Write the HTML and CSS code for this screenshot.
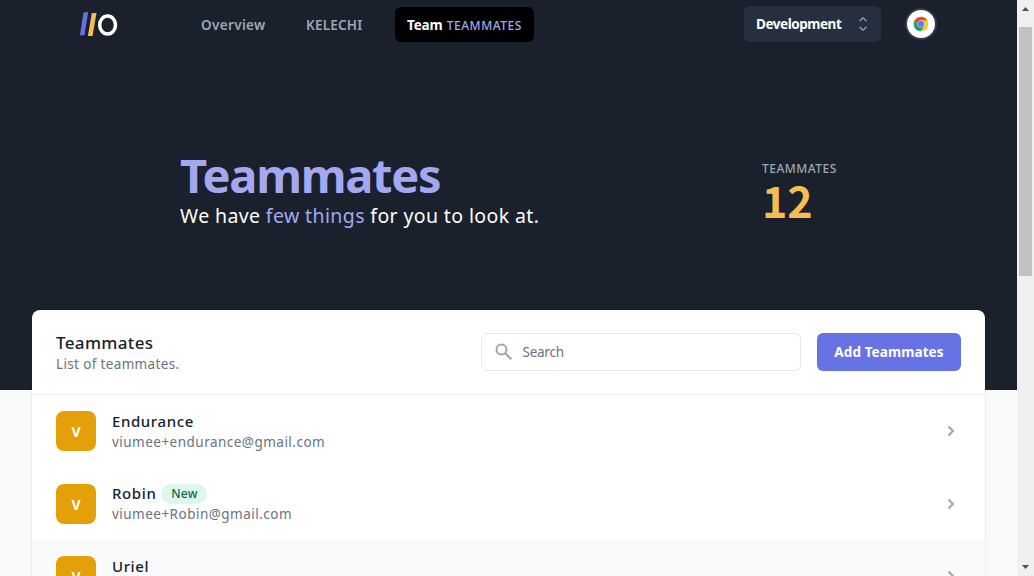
FILE: index.html
```html
<!DOCTYPE html>
<html lang="en">
<head>
<meta charset="utf-8">
<title>Teammates</title>
<link rel="stylesheet" href="styles.css">
</head>
<body>
<div class="page">
  <header class="hero">
    <nav class="nav">
      <svg class="logo" width="40" height="26" viewBox="0 0 40 26">
        <path d="M3.600 .2h4.600L4.400 23.300H-.1z" fill="#6772e5"/>
        <path d="M11.800 1h4.700L12.500 24H7.900z" fill="#f7bc52"/>
        <ellipse cx="27.600" cy="13" rx="7.900" ry="9" fill="none" stroke="#fff" stroke-width="3.500"/>
      </svg>
      <div class="links">
        <a class="link overview">Overview</a>
        <a class="link kelechi">KELECHI</a>
        <a class="link active"><span class="team">Team</span><span class="team-name">TEAMMATES</span></a>
      </div>
      <div class="select"><span>Development</span>
        <svg width="10" height="16" viewBox="0 0 10 16" fill="none" stroke="#8d96a5" stroke-width="1.500" stroke-linecap="round" stroke-linejoin="round"><path d="M1.800 4.800 5 1.800 8.200 4.800M1.800 11.200 5 14.200 8.200 11.200"/></svg>
      </div>
      <div class="profile">
        <svg width="16" height="16" viewBox="0 0 16 16">
          <circle cx="8" cy="8" r="7.300" fill="#fbc934"/>
          <path d="M1.680 4.350A7.300 7.300 0 0 1 14.320 4.350L8 4.350 4.840 9.830z" fill="#dc4c3f"/>
          <path d="M1.680 4.350A7.300 7.300 0 0 0 8 15.300L11.160 9.830 4.840 9.830z" fill="#1ea362"/>
          <circle cx="8" cy="8" r="3.500" fill="#d5e0f5"/>
          <circle cx="8" cy="8" r="3" fill="#4285f4"/>
        </svg>
      </div>
    </nav>
    <div class="intro">
      <div class="greeting">
        <h1>Teammates</h1>
        <p>We have <span>few things</span> for you to look at.</p>
      </div>
      <div class="stat">
        <div class="stat-label">TEAMMATES</div>
        <div class="stat-value">12</div>
      </div>
    </div>
  </header>
  <main class="card">
    <div class="card-head">
      <div class="card-title">
        <h2>Teammates</h2>
        <p>List of teammates.</p>
      </div>
      <div class="search">
        <svg width="18" height="18" viewBox="0 0 18 18" fill="none" stroke="#9fa6b2" stroke-width="2"><circle cx="6.500" cy="6.500" r="5"/><path d="M10 10l6.300 6.300"/></svg>
        <span>Search</span>
      </div>
      <button class="add">Add Teammates</button>
    </div>
    <div class="row">
      <div class="avatar">V</div>
      <div class="person"><div class="name"><span>Endurance</span></div><div class="email">viumee+endurance@gmail.com</div></div>
      <svg class="chevron" width="8" height="12" viewBox="0 0 8 12"><path d="M1.500 1.500 6 6 1.500 10.500"/></svg>
    </div>
    <div class="row">
      <div class="avatar">V</div>
      <div class="person"><div class="name"><span>Robin</span><span class="badge">New</span></div><div class="email">viumee+Robin@gmail.com</div></div>
      <svg class="chevron" width="8" height="12" viewBox="0 0 8 12"><path d="M1.500 1.500 6 6 1.500 10.500"/></svg>
    </div>
    <div class="row shaded">
      <div class="avatar">V</div>
      <div class="person"><div class="name"><span>Uriel</span></div><div class="email">viumee+Uriel@gmail.com</div></div>
      <svg class="chevron" width="8" height="12" viewBox="0 0 8 12"><path d="M1.500 1.500 6 6 1.500 10.500"/></svg>
    </div>
  </main>
</div>
<div class="scrollbar">
  <svg width="17" height="17" viewBox="0 0 17 17"><path d="M5 11h7L8.500 7z" fill="#505050"/></svg>
  <div class="thumb"></div>
  <svg class="down" width="17" height="17" viewBox="0 0 17 17"><path d="M5 6h7L8.500 10z" fill="#505050"/></svg>
</div>
</body>
</html>
```
FILE: styles.css
```css
* { box-sizing: border-box; margin: 0; padding: 0; }
body {
  display: flex;
  width: 1034px;
  height: 576px;
  overflow: hidden;
  font-family: "Noto Sans", "Open Sans", sans-serif;
  font-size: 14px;
  color: #161e2e;
}
.page { width: 1017px; height: 576px; overflow: hidden; background: #f9fafc; }
.hero { height: 390px; background: #1a202c; }
.nav { display: flex; height: 50px; padding: 0 0 0 80px; align-items: flex-start; }
.logo { margin-top: 12px; flex: none; overflow: visible; }
.links { display: flex; margin: 7px 0 0 65px; width: 559px; }
.link { display: flex; height: 35px; align-items: center; padding: 1px 16px 0; color: #9fa6b2; font-weight: 600; white-space: nowrap; }
.overview { width: 105px; font-size: 13.500px; letter-spacing: .35px; }
.kelechi { width: 105px; font-size: 13.500px; letter-spacing: .2px; }
.active { width: 139px; padding: 1px 12px 0; border-radius: 6px; background: #000; color: #fff; }
.team { width: 40px; font-size: 13.500px; font-weight: 700; letter-spacing: -.15px; }
.team-name { padding-top: 1px; font-size: 12px; font-weight: 500; letter-spacing: .55px; color: #a3a8f0; }
.select { display: flex; justify-content: space-between; align-items: center; flex: none; width: 137px; height: 36px; margin-top: 6px; padding: 0 13px 0 12px; border-radius: 6px; background: #252f3f; color: #fff; font-size: 13.500px; font-weight: 700; letter-spacing: -.45px; }
.profile { display: flex; align-items: center; justify-content: center; flex: none; width: 32px; height: 32px; margin: 8px 0 0 24px; border: 2px solid #303949; border-radius: 50%; background: #fff; }
.intro { display: flex; padding: 97px 0 0 180px; }
.greeting { width: 582px; }
h1 { font-size: 47px; line-height: 57px; font-weight: 700; letter-spacing: -1.300px; color: #a3a8f0; }
.greeting p { font-size: 19.500px; line-height: 24px; letter-spacing: .38px; color: #fff; white-space: nowrap; }
.greeting p span { color: #a3a8f0; }
.stat { padding-top: 14px; }
.stat-label { font-size: 12px; line-height: 16px; font-weight: 500; letter-spacing: .5px; color: #9fa6b2; }
.stat-value { font-family: "Noto Sans CJK SC", sans-serif; font-size: 43px; line-height: 44px; font-weight: 700; color: #f7bc52; }
.card { width: 953px; height: 400px; margin: -80px 0 0 32px; position: relative; background: #fff; border-radius: 8px; box-shadow: 0 0 0 1px rgba(0,0,0,.05); }
.card-head { display: flex; align-items: center; height: 85px; padding: 0 24px; border-bottom: 1px solid #f1f2f4; }
.card-title { width: 425px; }
h2 { font-size: 17px; line-height: 23px; font-weight: 500; letter-spacing: .35px; }
.card-title p { font-size: 13.500px; line-height: 20px; letter-spacing: .35px; color: #6b7280; }
.search { display: flex; align-items: center; gap: 9.500px; width: 320px; height: 38px; padding-left: 13px; border: 1px solid #e5e7eb; border-radius: 6px; color: #6b7280; font-size: 13.500px; letter-spacing: -.25px; }
.add { width: 144px; height: 38px; margin-left: 16px; border: 0; border-radius: 6px; background: #6772e5; color: #fff; font: 700 13.500px "Noto Sans", sans-serif; letter-spacing: .1px; white-space: nowrap; }
.row { display: flex; align-items: center; height: 72.500px; padding: 0 30px 0 24px; }
.shaded { background: #f9fafc; }
.avatar { width: 40px; height: 40px; margin-right: 16px; border-radius: 8px; background: #e3a008; color: #fff; font-weight: 700; font-size: 14px; line-height: 41px; text-align: center; }
.person { flex: 1; padding-bottom: 1px; }
.name { display: flex; align-items: center; height: 20px; font-size: 15px; line-height: 20px; font-weight: 500; letter-spacing: .6px; }
.email { height: 20px; font-size: 13.500px; line-height: 22px; letter-spacing: .48px; color: #6b7280; }
.badge { width: 46px; height: 20px; margin: 2px 0 0 5px; border-radius: 10px; background: #def7ec; color: #046c4e; font-size: 12px; line-height: 20px; font-weight: 500; letter-spacing: .3px; text-align: center; }
.chevron { fill: none; stroke: #9fa6b2; stroke-width: 2; }
.scrollbar { display: flex; flex-direction: column; width: 17px; height: 576px; background: #f0f0f0; }
.scrollbar svg { flex: none; }
.thumb { width: 13px; height: 249px; margin: 10px 0 0 2px; background: #c1c1c1; }
.down { margin-top: auto; }
```
